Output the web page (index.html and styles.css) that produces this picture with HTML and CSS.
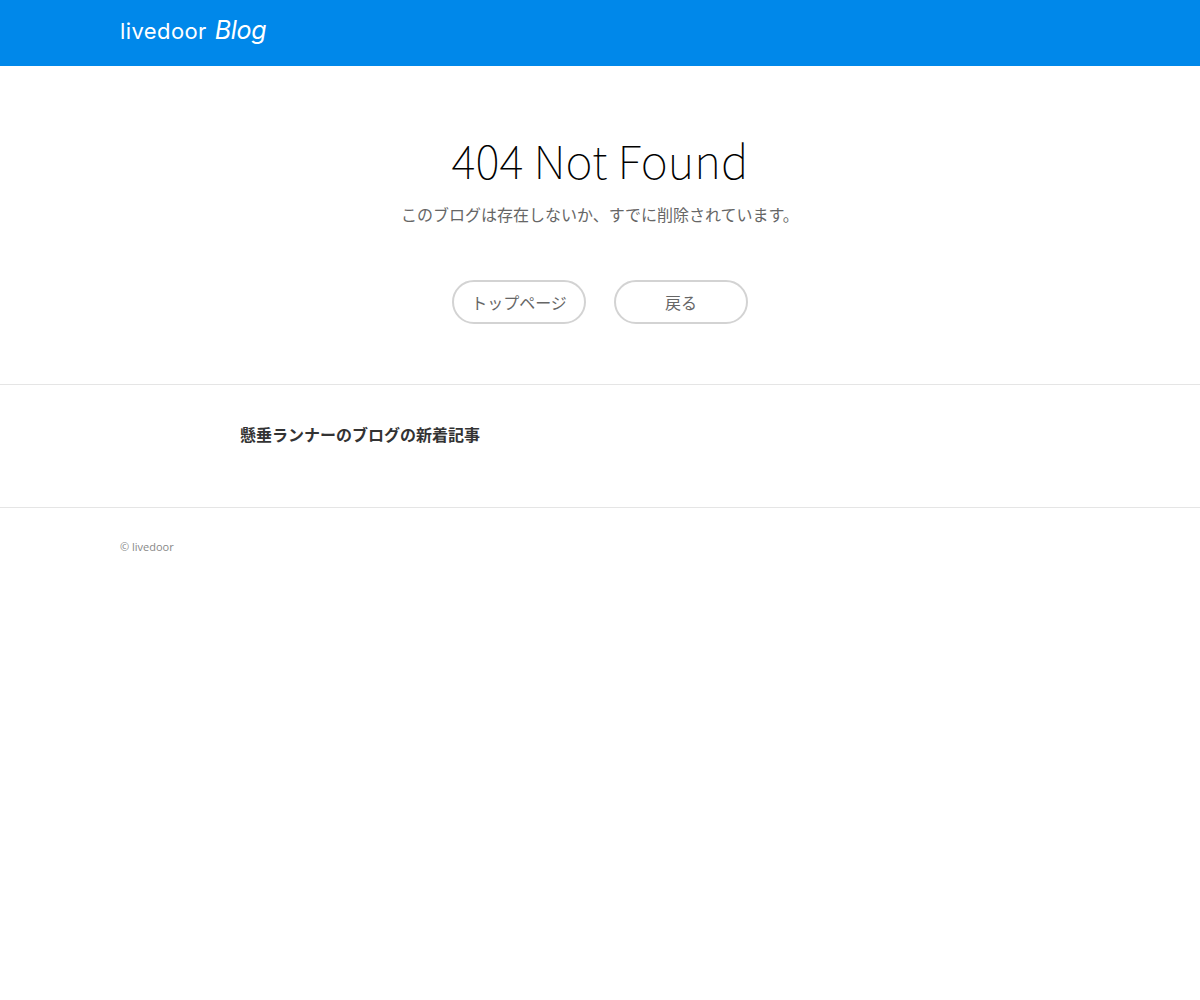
FILE: index.html
```html
<!DOCTYPE html>
<html lang="ja">
<head>
<meta charset="utf-8">
<title>404 Not Found</title>
<link rel="stylesheet" href="styles.css">
</head>
<body>
<header class="site-header">
  <a class="logo" href="#"><span class="logo-main">livedoor</span><span class="logo-blog">Blog</span></a>
</header>
<main>
  <section class="error">
    <h1 class="error-title">404 Not Found</h1>
    <p class="error-text">このブログは存在しないか、すでに削除されています。</p>
    <div class="actions">
      <a class="pill" href="#">トップページ</a>
      <a class="pill" href="#">戻る</a>
    </div>
  </section>
  <section class="recent">
    <h2 class="recent-title">懸垂ランナーのブログの新着記事</h2>
  </section>
</main>
<footer class="site-footer">
  <small class="copyright">© livedoor</small>
</footer>
</body>
</html>
```
FILE: styles.css
```css
* { box-sizing: border-box; }
html, body { margin: 0; padding: 0; }
body {
  background: #fff;
  color: #333;
  font-family: "Noto Sans CJK JP", "Noto Sans", sans-serif;
}
a { text-decoration: none; color: inherit; }
.site-header {
  height: 66px;
  background: #0088ea;
  padding: 0 120px;
  display: flex;
  align-items: center;
}
.logo {
  display: flex;
  align-items: baseline;
  gap: 8px;
  color: #fff;
  line-height: 1;
  position: relative;
  top: -3px;
}
.logo-main {
  font-family: "Inter", sans-serif;
  font-size: 22px;
  font-weight: 400;
  letter-spacing: 0.4px;
}
.logo-blog {
  font-family: "Inter", sans-serif;
  font-size: 25px;
  font-weight: 400;
  font-style: italic;
  letter-spacing: -0.3px;
}
.error {
  padding-top: 63px;
  height: 319px;
  border-bottom: 1px solid #e5e5e5;
  text-align: center;
}
.error-title {
  margin: 0;
  font-size: 46px;
  font-weight: 100;
  line-height: 60px;
  color: #000;
}
.error-text {
  margin: 14px 0 0;
  font-size: 16px;
  line-height: 22px;
  color: #666;
}
.actions {
  margin-top: 55px;
  display: flex;
  justify-content: center;
  gap: 28px;
}
.pill {
  width: 134px;
  height: 44px;
  border: 2px solid #d3d3d3;
  border-radius: 22px;
  display: flex;
  align-items: center;
  justify-content: center;
  font-size: 16px;
  color: #666;
}
.recent {
  height: 123px;
  border-bottom: 1px solid #e5e5e5;
  padding: 37px 240px 0;
}
.recent-title {
  margin: 0;
  font-size: 16px;
  font-weight: 700;
  line-height: 24px;
  color: #333;
}
.site-footer {
  padding: 31px 120px 0;
}
.copyright {
  display: block;
  font-family: "Open Sans", sans-serif;
  font-size: 11px;
  line-height: 16px;
  color: #888;
}
```
